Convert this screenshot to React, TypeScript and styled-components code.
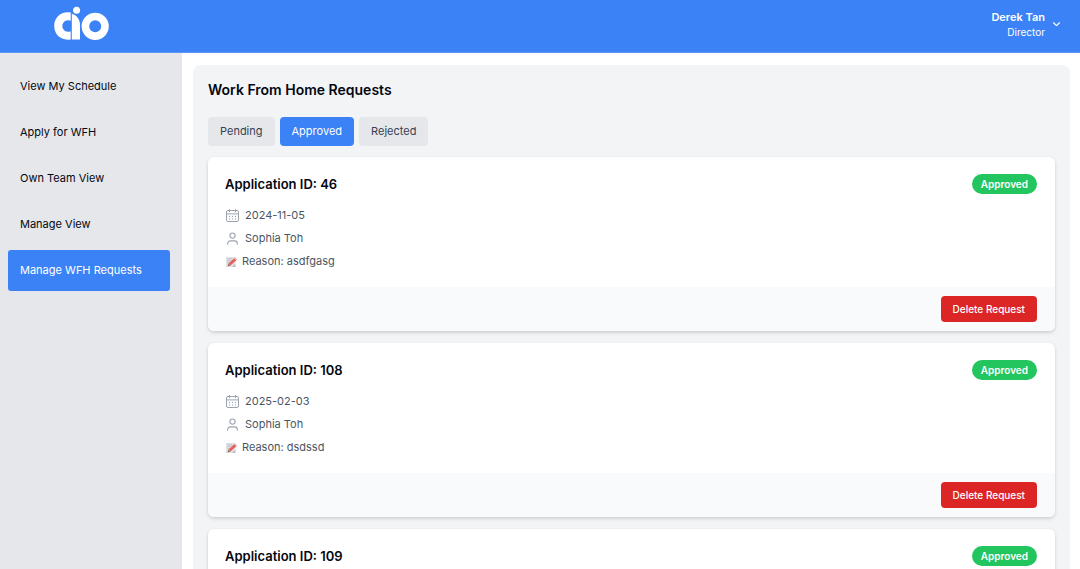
import React, { useState } from "react";
import styled, { createGlobalStyle } from "styled-components";

const GlobalStyle = createGlobalStyle`
  *, *::before, *::after { box-sizing: border-box; }
  body {
    margin: 0;
    background: #ffffff;
    color: #030712;
    font-family: Inter, "Liberation Sans", sans-serif;
    font-size: 11px;
    line-height: 17px;
  }
  button { font: inherit; border: 0; cursor: pointer; }
  h1, h2, p, ul { margin: 0; padding: 0; }
`;

const Page = styled.div`
  display: flex;
  flex-direction: column;
  height: 100vh;
`;

const Header = styled.header`
  display: flex;
  align-items: center;
  justify-content: space-between;
  flex: none;
  height: 53px;
  padding: 0 18px 4px 53px;
  background: #3b82f6;
  border-bottom: 1px solid #5b96f7;
  color: #ffffff;
`;

const LogoLink = styled.a`
  display: flex;
  color: inherit;
`;

const UserMenu = styled.button`
  display: flex;
  align-items: center;
  gap: 6px;
  padding: 0;
  background: none;
  color: inherit;
  text-align: right;
`;

const UserText = styled.span`
  display: flex;
  flex-direction: column;
`;

const UserName = styled.span`
  font-weight: 600;
  line-height: 16px;
`;

const UserRole = styled.span`
  font-size: 10px;
  line-height: 14px;
`;

const Body = styled.div`
  display: flex;
  flex: 1;
  min-height: 0;
`;

const Sidebar = styled.nav`
  flex: none;
  width: 182px;
  padding: 13px 12px 12px 8px;
  background: #e5e7eb;
`;

const NavList = styled.ul`
  display: flex;
  flex-direction: column;
  gap: 5px;
  list-style: none;
`;

const NavLink = styled.a<{ $active?: boolean }>`
  display: block;
  padding: 12px;
  border-radius: 3px;
  background: ${(p) => (p.$active ? "#3b82f6" : "transparent")};
  color: ${(p) => (p.$active ? "#ffffff" : "#030712")};
  text-decoration: none;
`;

const Main = styled.main`
  flex: 1;
  min-width: 0;
  padding: 12px 10px 12px 11px;
  overflow-y: auto;
  scrollbar-width: none;
`;

const Panel = styled.section`
  padding: 15px;
  border-radius: 8px;
  background: #f3f4f6;
`;

const Title = styled.h1`
  font-size: 14px;
  font-weight: 600;
  line-height: 20px;
`;

const Tabs = styled.div`
  display: flex;
  gap: 5px;
  margin: 17px 0 11px;
`;

const Tab = styled.button<{ $active: boolean }>`
  padding: 6px 12px;
  border-radius: 4px;
  background: ${(p) => (p.$active ? "#3b82f6" : "#e5e7eb")};
  color: ${(p) => (p.$active ? "#ffffff" : "#374151")};
`;

const CardList = styled.div`
  display: flex;
  flex-direction: column;
  gap: 12px;
`;

const Card = styled.article`
  overflow: hidden;
  border-radius: 6px;
  background: #ffffff;
  box-shadow: 0 2px 4px rgba(0, 0, 0, 0.1), 0 1px 3px rgba(0, 0, 0, 0.08);
`;

const CardBody = styled.div`
  padding: 17px 18px 17px 17px;
`;

const CardHeader = styled.div`
  display: flex;
  align-items: center;
  justify-content: space-between;
  height: 20px;
`;

const CardTitle = styled.h2`
  font-size: 13px;
  font-weight: 600;
  line-height: 20px;
`;

const Badge = styled.span`
  padding: 2px 9px;
  border-radius: 10px;
  background: #22c55e;
  color: #ffffff;
  font-size: 10px;
  font-weight: 600;
  line-height: 16px;
`;

const Details = styled.div`
  display: flex;
  flex-direction: column;
  gap: 6px;
  margin-top: 13px;
  color: #4b5563;
`;

const Detail = styled.p`
  display: flex;
  align-items: center;
  gap: 5px;

  svg { flex: none; color: #9ca3af; }
`;

const CardFooter = styled.footer`
  display: flex;
  justify-content: flex-end;
  padding: 9px 18px;
  background: #f9fafb;
`;

const DeleteButton = styled.button`
  padding: 5px 12px;
  border-radius: 4px;
  background: #dc2626;
  color: #ffffff;
  font-size: 10px;
  font-weight: 500;
  line-height: 16px;
`;

const Logo = () => (
  <svg width="57" height="36" viewBox="0 0 57 36" role="img" aria-label="AIO">
    <path
      d="M17.7 6.6 C8 5 1.2 11.5 1.2 20 C1.2 28.5 8 35 17.7 33.4 V25.2 A5.8 5.8 0 1 1 17.7 14.8 Z"
      fill="currentColor"
    />
    <path d="M18.8 7.8 C24 9.2 27 13.6 27 19.5 V33.4 H18.8 Z" fill="currentColor" />
    <circle cx="23.6" cy="4.2" r="3.5" fill="currentColor" />
    <circle cx="42.2" cy="20.3" r="9.8" fill="none" stroke="currentColor" strokeWidth="7.6" />
  </svg>
);

const ChevronIcon = () => (
  <svg width="11" height="11" viewBox="0 0 11 11" fill="none" stroke="currentColor" strokeWidth="1.2">
    <path d="M2.5 3.8 L5.5 6.6 L8.5 3.8" strokeLinecap="round" strokeLinejoin="round" />
  </svg>
);

const CalendarIcon = () => (
  <svg width="15" height="14" viewBox="0 0 15 14" fill="none" stroke="currentColor" strokeLinecap="round">
    <rect x="1.5" y="1.5" width="12" height="11" rx="1.4" />
    <path d="M1.5 4.9h12M4.5 .5v2.3M10.5 .5v2.3" />
    <path d="M4.5 7.4h.01M7.5 7.4h.01M10.5 7.4h.01M4.5 9.9h.01M7.5 9.9h.01M10.5 9.9h.01" strokeWidth="1.3" />
  </svg>
);

const PersonIcon = () => (
  <svg width="15" height="14" viewBox="0 0 15 14" fill="none" stroke="currentColor" strokeWidth="1.1" strokeLinecap="round">
    <circle cx="7.5" cy="3.6" r="2.6" />
    <path d="M2.7 12.3v-.7a2.7 2.7 0 0 1 2.7-2.7h4.2a2.7 2.7 0 0 1 2.7 2.7v.7" />
  </svg>
);

const MemoIcon = () => (
  <svg width="12" height="12" viewBox="0 0 12 12" aria-hidden="true">
    <path d="M1 1h9.5v7L8 11H1z" fill="#dfe1e5" />
    <path d="M2.2 2.8h5M2.2 4.6h4M2.2 6.4h2.5" stroke="#b3b8c1" strokeWidth=".7" />
    <path d="M7 11h3.5V7.5z" fill="#b8bcc4" />
    <path d="M2.6 10.4l.9-2.8 1.9 1.9z" fill="#8c6a55" />
    <path d="M3.5 7.6L9.2 2.2l2.2 2.1-6 5.2z" fill="#e9605b" />
    <path d="M9.2 2.2l.8-.7 2 1.9-.6.9z" fill="#f5a6a3" />
  </svg>
);

const navItems = [
  "View My Schedule",
  "Apply for WFH",
  "Own Team View",
  "Manage View",
  "Manage WFH Requests",
];

const tabs = ["Pending", "Approved", "Rejected"];

const requests = [
  { id: 46, date: "2024-11-05", name: "Sophia Toh", reason: "asdfgasg" },
  { id: 108, date: "2025-02-03", name: "Sophia Toh", reason: "dsdssd" },
  { id: 109, date: "2025-02-04", name: "Sophia Toh", reason: "dsdssd" },
];

export default function App() {
  const [tab, setTab] = useState("Approved");

  return (
    <Page>
      <GlobalStyle />
      <Header>
        <LogoLink href="#home"><Logo /></LogoLink>
        <UserMenu type="button" aria-haspopup="menu">
          <UserText>
            <UserName>Derek Tan</UserName>
            <UserRole>Director</UserRole>
          </UserText>
          <ChevronIcon />
        </UserMenu>
      </Header>
      <Body>
        <Sidebar>
          <NavList>
            {navItems.map((item) => (
              <li key={item}>
                <NavLink href="#nav" $active={item === "Manage WFH Requests"}>{item}</NavLink>
              </li>
            ))}
          </NavList>
        </Sidebar>
        <Main>
          <Panel>
            <Title>Work From Home Requests</Title>
            <Tabs>
              {tabs.map((name) => (
                <Tab key={name} type="button" $active={name === tab} onClick={() => setTab(name)}>
                  {name}
                </Tab>
              ))}
            </Tabs>
            <CardList>
              {requests.map((r) => (
                <Card key={r.id}>
                  <CardBody>
                    <CardHeader>
                      <CardTitle>Application ID: {r.id}</CardTitle>
                      <Badge>Approved</Badge>
                    </CardHeader>
                    <Details>
                      <Detail><CalendarIcon />{r.date}</Detail>
                      <Detail><PersonIcon />{r.name}</Detail>
                      <Detail><MemoIcon />Reason: {r.reason}</Detail>
                    </Details>
                  </CardBody>
                  <CardFooter>
                    <DeleteButton type="button">Delete Request</DeleteButton>
                  </CardFooter>
                </Card>
              ))}
            </CardList>
          </Panel>
        </Main>
      </Body>
    </Page>
  );
}
